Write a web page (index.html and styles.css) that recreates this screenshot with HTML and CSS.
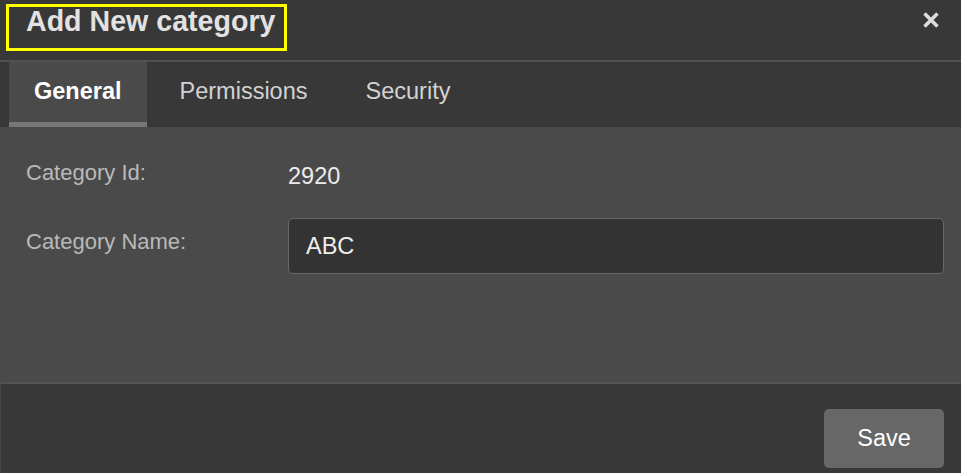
FILE: index.html
```html
<!DOCTYPE html>
<html lang="en">
<head>
<meta charset="utf-8">
<title>Add New category</title>
<link rel="stylesheet" href="styles.css">
</head>
<body>
<div class="dialog">
  <header class="dlg-header">
    <h1 class="dlg-title">Add New category</h1>
    <button class="dlg-close" type="button" aria-label="Close">
      <svg width="20" height="20" viewBox="0 0 20 20" aria-hidden="true">
        <path d="M3.5 3.5 L16.5 16.5 M16.5 3.5 L3.5 16.5" stroke="#dcdcdc" stroke-width="3.6" fill="none"/>
      </svg>
    </button>
  </header>
  <nav class="tabs">
    <a class="tab tab-active">General</a>
    <a class="tab">Permissions</a>
    <a class="tab">Security</a>
  </nav>
  <section class="content">
    <div class="field-label">Category Id:</div>
    <div class="field-value">2920</div>
    <div class="field-label field-label-input">Category Name:</div>
    <input class="field-input" type="text" value="ABC">
  </section>
  <footer class="dlg-footer">
    <button class="btn-save" type="button">Save</button>
  </footer>
</div>
</body>
</html>
```

FILE: styles.css
```css
html, body {
  margin: 0;
  padding: 0;
  width: 961px;
  height: 473px;
  overflow: hidden;
  background: #383838;
  font-family: "Liberation Sans", Arial, sans-serif;
}

.dialog {
  display: flex;
  flex-direction: column;
  width: 961px;
}

.dlg-header {
  height: 56px;
  padding: 4px 20px 0 6px;
  background: #383838;
  border-bottom: 2px solid #515151;
  display: flex;
  justify-content: space-between;
  align-items: flex-start;
}

.dlg-title {
  margin: 0;
  font-size: 28.6px;
  font-weight: bold;
  line-height: 28px;
  color: #e2e2e2;
  border: 3px solid #ffff00;
  padding: 0 9px 13px 17px;
}

.dlg-close {
  margin-top: 6px;
  padding: 0;
  border: none;
  background: transparent;
  width: 20px;
  height: 20px;
  display: flex;
  cursor: pointer;
}

.tabs {
  display: flex;
  gap: 8px;
  padding-left: 9px;
  background: #383838;
}

.tab {
  padding: 0 25px 2px;
  line-height: 58px;
  font-size: 23.5px;
  color: #d2d2d2;
  border-bottom: 5px solid transparent;
}

.tab-active {
  background: #4a4a4a;
  color: #ffffff;
  font-weight: bold;
  border-bottom-color: #777777;
}

.content {
  height: 255px;
  box-sizing: border-box;
  padding: 33px 17px 0 26px;
  background: #4a4a4a;
  display: grid;
  grid-template-columns: 262px 1fr;
  row-gap: 28px;
  align-content: start;
  align-items: start;
}

.field-label {
  font-size: 22px;
  line-height: 25px;
  color: #b9b9b9;
}

.field-label-input {
  margin-top: 11px;
}

.field-value {
  margin-top: 2px;
  font-size: 23.5px;
  line-height: 28px;
  color: #ececec;
}

.field-input {
  box-sizing: border-box;
  width: 100%;
  height: 56px;
  margin: 0;
  padding: 0 17px;
  background: #333333;
  border: 1px solid #686868;
  border-radius: 5px;
  font-family: "Liberation Sans", Arial, sans-serif;
  font-size: 23.5px;
  color: #eeeeee;
  outline: none;
}

.dlg-footer {
  border-top: 2px solid #545454;
  border-left: 1px solid #434343;
  background: #383838;
  display: flex;
  justify-content: flex-end;
  padding: 25px 17px 25px 0;
}

.btn-save {
  width: 120px;
  height: 59px;
  border: none;
  border-radius: 5px;
  background: #676767;
  color: #ffffff;
  font-family: "Liberation Sans", Arial, sans-serif;
  font-size: 23.5px;
  cursor: pointer;
}
```
